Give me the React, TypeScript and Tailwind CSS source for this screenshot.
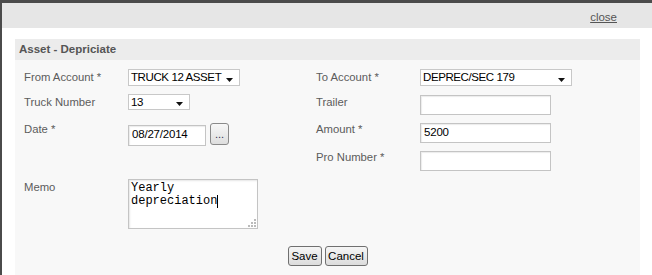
import React from 'react'

const font = { fontFamily: '"Liberation Sans", Arial, sans-serif' }

function Arrow() {
  return (
    <svg width="8" height="5" viewBox="0 0 8 5" className="absolute right-[5px] bottom-[2px]">
      <path d="M0 0 H7 L3.5 4 Z" fill="#111" />
    </svg>
  )
}

function Select({ value, width, height, mt }: { value: string; width: string; height: string; mt: string }) {
  return (
    <div
      className={`relative ${width} ${height} ${mt} bg-white border border-[#c8c8c8] text-[11.5px] tracking-[-0.4px] leading-[14px] text-black pl-[2px]`}
    >
      {value}
      <Arrow />
    </div>
  )
}

function Input({ value = '', width, mt, height = 'h-[20px]' }: { value?: string; width: string; mt: string; height?: string }) {
  return (
    <div
      className={`${width} ${height} ${mt} bg-white border border-[#c4c4c4] shadow-[inset_1px_1px_1px_rgba(0,0,0,0.08)] text-[11.5px] tracking-[-0.2px] leading-[17px] text-black pl-[3px]`}
    >
      {value}
    </div>
  )
}

function Label({ children, mt }: { children: React.ReactNode; mt: string }) {
  return <div className={`w-[104px] shrink-0 ${mt} text-[11.3px] leading-[14px] text-[#5c5c5c]`}>{children}</div>
}

function Btn({ children, width }: { children: React.ReactNode; width: string }) {
  return (
    <button
      className={`${width} h-[20px] rounded-[3px] border border-[#707070] bg-gradient-to-b from-[#f6f6f6] to-[#dcdcdc] text-[11.5px] leading-[16px] text-black`}
      style={font}
    >
      {children}
    </button>
  )
}

export default function App() {
  return (
    <div className="w-[652px] h-[275px] bg-[#4b4b4b] pt-[3px] pl-[2px] overflow-hidden" style={font}>
      <div className="w-full h-full bg-white flex flex-col">
        <div className="h-[25px] bg-[#e6e6e6] flex items-center justify-end pr-[35px]">
          <a href="#" className="text-[11.5px] leading-[14px] text-[#555] underline mt-[2px]">
            close
          </a>
        </div>
        <div className="flex-1 pl-[13px] pr-[12px] pt-[11px]">
          <div className="h-full flex flex-col">
            <div className="h-[21px] bg-[#ececec] pl-[4px] flex items-center text-[11.5px] font-bold text-[#555]">
              Asset - Depriciate
            </div>
            <div className="flex-1 bg-[#f8f8f8] pl-[9px]">
              {/* row 1 */}
              <div className="flex h-[32px]">
                <Label mt="mt-[10px]">From Account *</Label>
                <div className="w-[188px] shrink-0">
                  <Select value="TRUCK 12 ASSET" width="w-[112px]" height="h-[17px]" mt="mt-[9px]" />
                </div>
                <Label mt="mt-[10px]">To Account *</Label>
                <Select value="DEPREC/SEC 179" width="w-[152px]" height="h-[17px]" mt="mt-[9px]" />
              </div>
              {/* row 2 */}
              <div className="flex h-[28px]">
                <Label mt="mt-[3px]">Truck Number</Label>
                <div className="w-[188px] shrink-0">
                  <Select value="13" width="w-[62px]" height="h-[16px]" mt="mt-[2px]" />
                </div>
                <Label mt="mt-[3px]">Trailer</Label>
                <Input width="w-[131px]" mt="mt-[3px]" />
              </div>
              {/* row 3 */}
              <div className="flex h-[28px]">
                <Label mt="mt-[2px]">Date *</Label>
                <div className="w-[188px] shrink-0 flex items-start">
                  <Input value="08/27/2014" width="w-[78px]" mt="mt-[5px]" height="h-[21px]" />
                  <button className="ml-[4px] mt-[3px] w-[19px] h-[22px] rounded-[3px] border border-[#8a8a8a] bg-gradient-to-b from-[#f8f8f8] to-[#dedede] text-[11px] leading-[18px] text-[#335]">
                    ...
                  </button>
                </div>
                <Label mt="mt-[2px]">Amount *</Label>
                <Input value="5200" width="w-[131px]" mt="mt-[3px]" />
              </div>
              {/* row 4 */}
              <div className="flex h-[28px]">
                <div className="w-[292px] shrink-0" />
                <Label mt="mt-[2px]">Pro Number *</Label>
                <Input width="w-[131px]" mt="mt-[3px]" />
              </div>
              {/* memo */}
              <div className="flex h-[62px]">
                <Label mt="mt-[4px]">Memo</Label>
                <div className="relative mt-[3px] w-[130px] h-[50px] bg-white border border-[#c4c4c4] shadow-[inset_1px_1px_2px_rgba(0,0,0,0.1)] pl-[2px] pt-[2px] text-[12px] leading-[13px] text-black" style={{ fontFamily: '"Liberation Mono", "Courier New", monospace' }}>
                  <div>Yearly</div>
                  <div>
                    depreciation<span className="inline-block w-[1px] h-[13px] bg-black align-top" />
                  </div>
                  <svg width="8" height="8" viewBox="0 0 8 8" className="absolute right-[1px] bottom-[1px]">
                    <rect x="6" y="0" width="2" height="2" fill="#bbb" />
                    <rect x="3" y="3" width="2" height="2" fill="#bbb" />
                    <rect x="6" y="3" width="2" height="2" fill="#bbb" />
                    <rect x="0" y="6" width="2" height="2" fill="#bbb" />
                    <rect x="3" y="6" width="2" height="2" fill="#bbb" />
                    <rect x="6" y="6" width="2" height="2" fill="#bbb" />
                  </svg>
                </div>
              </div>
              {/* buttons */}
              <div className="flex justify-center gap-[3px] pt-[8px] pr-[9px]">
                <Btn width="w-[34px]">Save</Btn>
                <Btn width="w-[43px]">Cancel</Btn>
              </div>
            </div>
          </div>
        </div>
      </div>
    </div>
  )
}
